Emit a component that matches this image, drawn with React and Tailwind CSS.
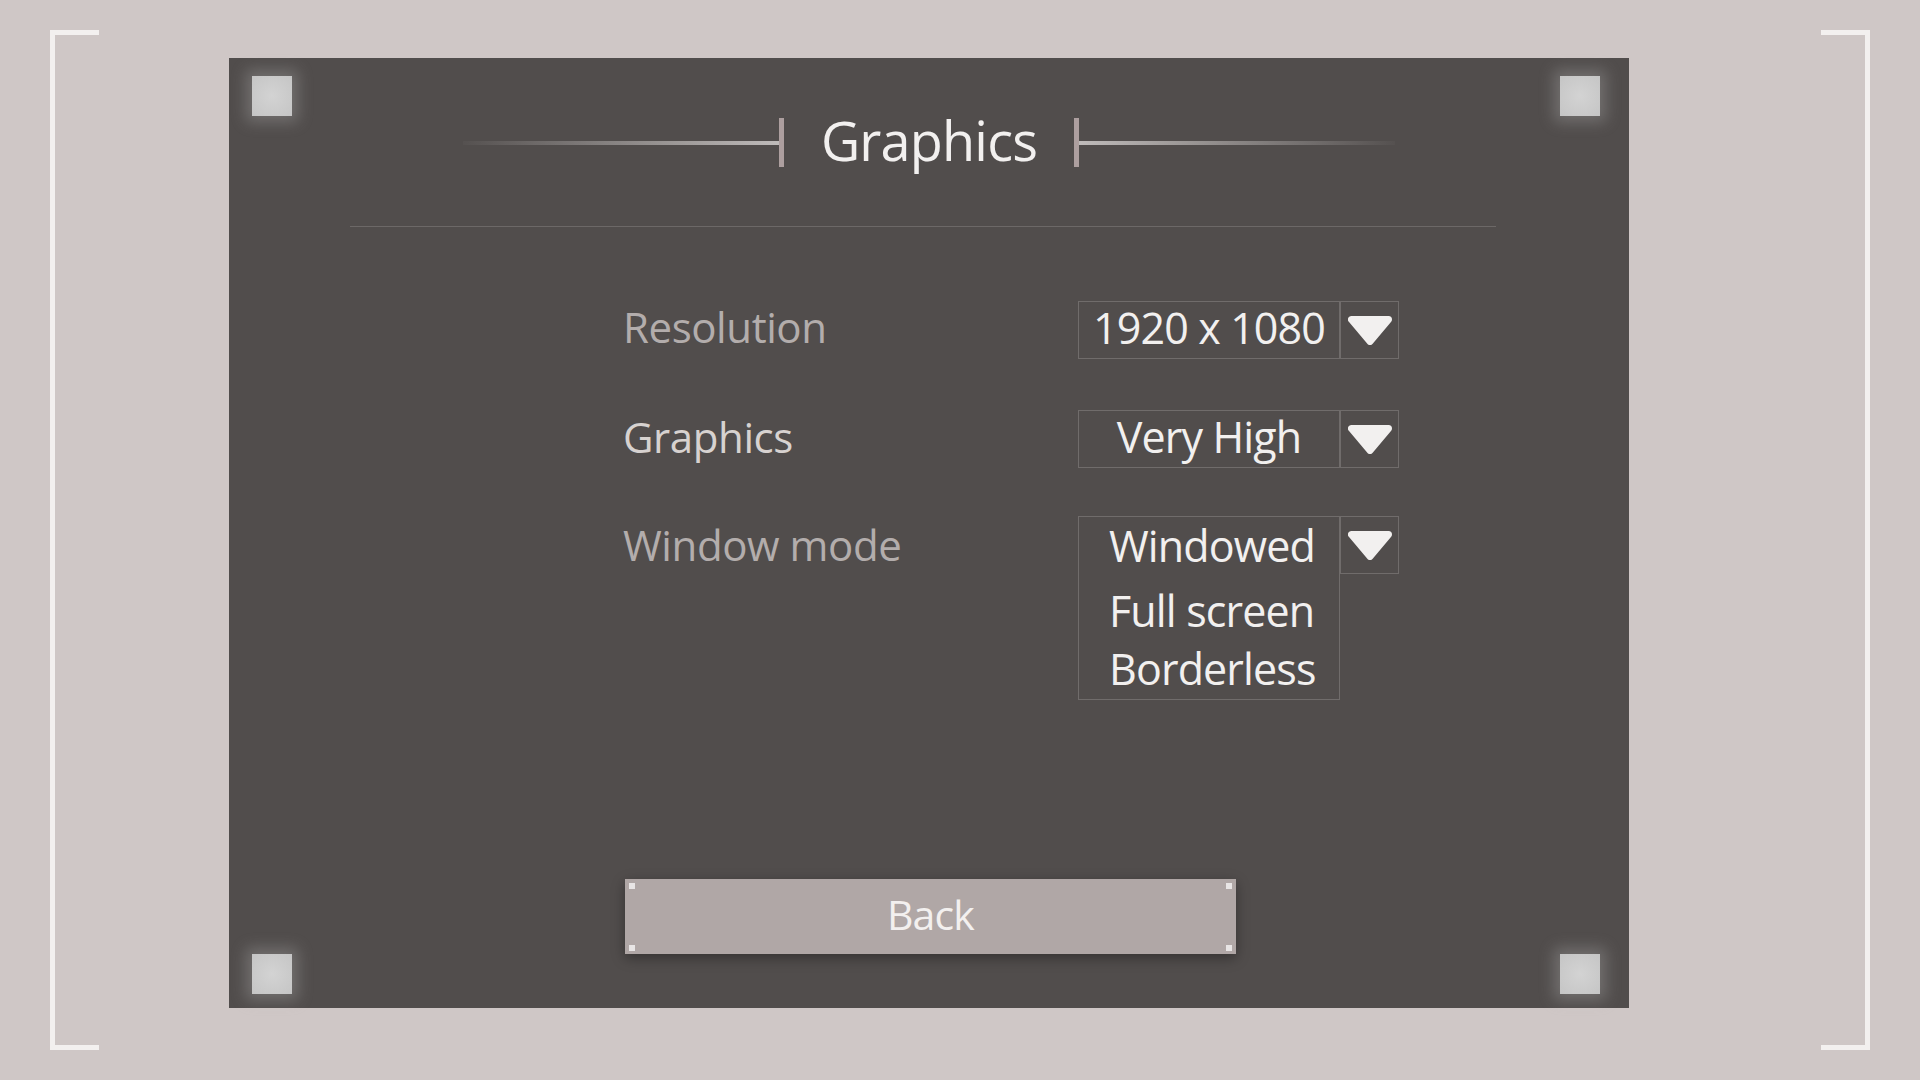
import { useState } from 'react'

const OPTIONS = ['Windowed', 'Full screen', 'Borderless']

// rounded down-pointing triangle used by every dropdown
function Arrow() {
  return (
    <svg width="44" height="29" viewBox="0 0 44 29">
      <polygon
        points="3.5,3.5 40.5,3.5 22,25.5"
        fill="#f2f0ef"
        stroke="#f2f0ef"
        strokeWidth="7"
        strokeLinejoin="round"
      />
    </svg>
  )
}

function Glow({ className }) {
  return (
    <div
      className={`absolute w-[40px] h-[40px] bg-[radial-gradient(circle,#d3d3d3,#c5c5c5)] shadow-[0_0_14px_6px_rgba(200,200,200,0.28)] ${className}`}
    />
  )
}

function Select({ value }) {
  return (
    <div className="flex">
      <div className="w-[262px] h-[58px] pb-[6px] border border-[#706c6b] flex items-center justify-center text-[43px] tracking-[-0.02em] text-[#f2f0ef] leading-none">
        {value}
      </div>
      <div className="w-[59px] h-[58px] border border-[#706c6b] flex items-center justify-center">
        <Arrow />
      </div>
    </div>
  )
}

function Row({ label, tone, children, className = '', pad = 'pb-[7px]' }) {
  return (
    <div className={`flex items-start ${className}`}>
      <div
        className={`w-[455px] h-[58px] ${pad} flex items-center text-[42px] tracking-[-0.01em] leading-none ${tone}`}
      >
        {label}
      </div>
      {children}
    </div>
  )
}

function Bracket({ side }) {
  return (
    <div
      className={`w-[49px] h-[1020px] border-y-[5px] border-[#f3f0ef] ${
        side === 'left' ? 'border-l-[5px]' : 'border-r-[5px] ml-auto'
      }`}
    />
  )
}

export default function App() {
  const [mode] = useState('Windowed')

  return (
    <div className="w-[1920px] h-[1080px] bg-[#cfc7c6] flex px-[50px] py-[30px] overflow-hidden font-['Open_Sans',sans-serif]">
      <Bracket side="left" />

      {/* Panel */}
      <div className="relative ml-[130px] mt-[28px] w-[1400px] h-[950px] bg-[#514d4c] flex flex-col pt-[60px]">
        <Glow className="left-[23px] top-[18px]" />
        <Glow className="right-[29px] top-[18px]" />
        <Glow className="left-[23px] bottom-[14px]" />
        <Glow className="right-[29px] bottom-[14px]" />

        {/* Title */}
        <div className="flex items-center justify-center h-[49px]">
          <div className="w-[316px] h-[4px] bg-[linear-gradient(to_right,#555150,#bfbbba)]" />
          <div className="w-[5px] h-[49px] bg-[#ad9f9f]" />
          <h1 className="mx-[37px] text-[54px] tracking-[-0.015em] leading-none text-[#f2f0ef] -mt-[5px]">
            Graphics
          </h1>
          <div className="w-[5px] h-[49px] bg-[#ad9f9f]" />
          <div className="w-[316px] h-[4px] bg-[linear-gradient(to_left,#555150,#bfbbba)]" />
        </div>

        <div className="ml-[121px] mt-[59px] w-[1146px] h-[1px] bg-[#6c6867]" />

        {/* Settings */}
        <div className="ml-[394px] mt-[74px] flex flex-col">
          <Row label="Resolution" tone="text-[#b3adac]">
            <Select value="1920 x 1080" />
          </Row>
          <Row label="Graphics" tone="text-[#d7d2d0]" className="mt-[51px]" pad="pb-[5px]">
            <Select value="Very High" />
          </Row>
          <Row label="Window mode" tone="text-[#b3adac]" className="mt-[48px]" pad="pb-0">
            <div className="flex items-start">
              <div className="w-[262px] border border-[#706c6b] flex flex-col pl-[30px] pb-[2px] text-[43px] tracking-[-0.02em] leading-none text-[#f2f0ef]">
                <div className="h-[56px] flex items-center">{mode}</div>
                {OPTIONS.filter((o) => o !== mode).map((o, i) => (
                  <div
                    key={o}
                    className={`h-[58px] flex items-center ${i === 0 ? 'mt-[8px]' : ''}`}
                  >
                    {o}
                  </div>
                ))}
              </div>
              <div className="w-[59px] h-[58px] border border-[#706c6b] flex items-center justify-center">
                <Arrow />
              </div>
            </div>
          </Row>
        </div>

        {/* Back */}
        <button className="relative mt-auto mb-[54px] ml-[396px] w-[611px] h-[75px] pb-[5px] bg-[#b0a7a6] shadow-[0_4px_12px_rgba(0,0,0,0.35)] flex items-center justify-center text-[41px] tracking-[-0.02em] leading-none text-[#f3f0ef]">
          <span className="absolute left-[4px] top-[4px] w-[6px] h-[6px] bg-[#e8e5e5]" />
          <span className="absolute right-[4px] top-[4px] w-[6px] h-[6px] bg-[#e8e5e5]" />
          <span className="absolute left-[4px] bottom-[3px] w-[6px] h-[6px] bg-[#e8e5e5]" />
          <span className="absolute right-[4px] bottom-[3px] w-[6px] h-[6px] bg-[#e8e5e5]" />
          Back
        </button>
      </div>

      <Bracket side="right" />
    </div>
  )
}
